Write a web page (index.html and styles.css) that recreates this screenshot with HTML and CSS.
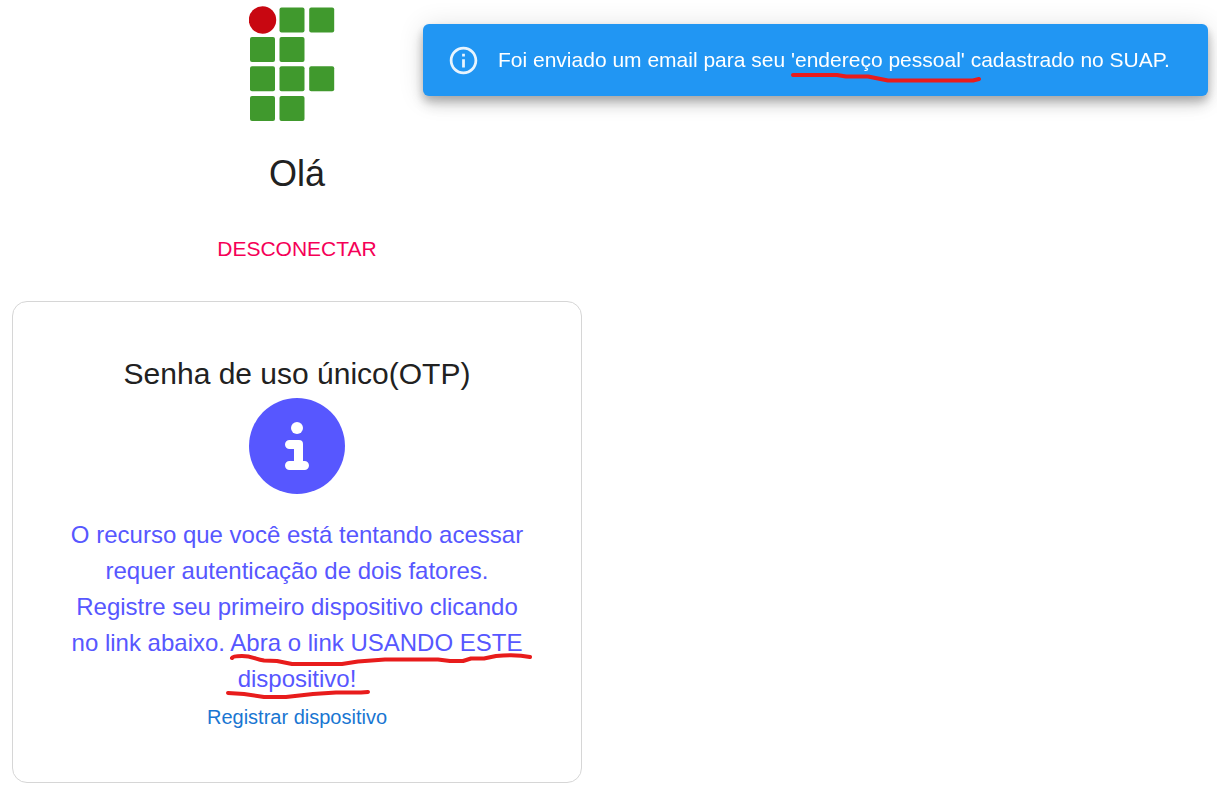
FILE: index.html
```html
<!DOCTYPE html>
<html lang="pt-BR">
<head>
  <meta charset="UTF-8" />
  <meta name="viewport" content="width=device-width, initial-scale=1.0"/>
  <title>Senha de uso único</title>
  <link rel="stylesheet" href="styles.css">
</head>
<body>
  <main class="container">
    <svg class="logo" viewBox="0 0 96 116" role="img" aria-label="IF">
      <circle cx="13.5" cy="14" r="13.7" fill="#c80711"/>
      <g fill="#40992d">
        <rect x="30.5" y="1.5" width="25" height="25" rx="2"/>
        <rect x="60.2" y="1.5" width="25" height="25" rx="2"/>
        <rect x="1" y="31" width="25" height="25" rx="2"/>
        <rect x="30.5" y="31" width="25" height="25" rx="2"/>
        <rect x="1" y="60.3" width="25" height="25" rx="2"/>
        <rect x="30.5" y="60.3" width="25" height="25" rx="2"/>
        <rect x="60.2" y="60.3" width="25" height="25" rx="2"/>
        <rect x="1" y="90" width="25" height="25" rx="2"/>
        <rect x="30.5" y="90" width="25" height="25" rx="2"/>
      </g>
    </svg>

    <h1>Olá</h1>
    <button class="btn" type="button">DESCONECTAR</button>

    <section class="card">
      <h2>Senha de uso único(OTP)</h2>
      <svg class="info" viewBox="0 0 96 96" aria-hidden="true">
        <circle cx="48" cy="48" r="48" fill="#5757ff"/>
        <circle cx="48" cy="30" r="6" fill="#fff"/>
        <path fill="#fff" d="M40.500 42H50a4 4 0 0 1 4 4v17h1.500a4.500 4.500 0 0 1 0 9h-15a4.500 4.500 0 0 1 0-9H45V51h-4.500a4.500 4.500 0 0 1 0-9z"/>
      </svg>
      <p class="texto">
        O recurso que você está tentando acessar requer autenticação de dois fatores. Registre seu primeiro dispositivo clicando no link abaixo.
        <span class="marca">Abra o link USANDO ESTE<svg class="risco" viewBox="0 0 302 12" aria-hidden="true"><path d="M2 5Q3 3 12 3C22 3 25 6 34 7.500L47 8L62 11H112L128 8.500L155 6.500H208L220 8H233L241 5.500H254L266 3Q286 1 300 4"/></svg></span>
        <span class="marca">dispositivo!<svg class="risco risco-curto" viewBox="0 0 144 12" aria-hidden="true"><path d="M2 4L18 5L38 8H60L87 5L110 3.500H135L142 3"/></svg></span>
      </p>
      <a class="link" href="#">Registrar dispositivo</a>
    </section>
  </main>

  <div class="alerta" role="alert">
    <svg class="alerta-icone" viewBox="0 0 24 24" aria-hidden="true">
      <path fill="#fff" d="M11 7h2v2h-2zm0 4h2v6h-2zm1-9C6.480 2 2 6.480 2 12s4.480 10 10 10 10-4.480 10-10S17.520 2 12 2zm0 18c-4.410 0-8-3.590-8-8s3.590-8 8-8 8 3.590 8 8-3.590 8-8 8z"/>
    </svg>
    <div>Foi enviado um email para seu <span class="marca">'endereço pessoal'<svg class="risco risco-alerta" viewBox="0 0 190 12" aria-hidden="true"><path d="M2 3H46L55 4.500H77L97 8.500H182L188 7"/></svg></span> cadastrado no SUAP.</div>
  </div>
</body>
</html>
```

FILE: styles.css
```css
body {
  margin: 0;
  font-family: "Liberation Sans", Arial, sans-serif;
  background-color: #fff;
  color: #212121;
}

.container {
  display: flex;
  flex-direction: column;
  align-items: center;
  max-width: 570px;
  padding: 6px 12px 8px;
}

.logo {
  width: 96px;
  height: 116px;
}

h1 {
  margin: 28px 0 35px;
  font-size: 36px;
  font-weight: normal;
  line-height: 48px;
}

.btn {
  margin-bottom: 36px;
  padding: 0 12px;
  border: none;
  background: none;
  font-family: inherit;
  font-size: 21px;
  line-height: 32px;
  color: #f50057;
  cursor: pointer;
}

.card {
  display: flex;
  flex-direction: column;
  align-items: center;
  box-sizing: border-box;
  width: 100%;
  padding: 48px;
  border: 1px solid #d6d6d6;
  border-radius: 15px;
  text-align: center;
}

h2 {
  margin: 0;
  font-size: 30px;
  font-weight: normal;
  line-height: 48px;
}

.info {
  width: 96px;
  height: 96px;
}

.texto {
  margin: 23px 0 0;
  font-size: 24px;
  line-height: 36px;
  color: #5757ff;
}

.link {
  margin-top: 5px;
  margin-bottom: 2px;
  font-size: 20px;
  line-height: 30px;
  color: #1976d2;
  text-decoration: none;
}

.alerta {
  position: fixed;
  top: 24px;
  right: 9px;
  display: flex;
  align-items: center;
  gap: 18px;
  box-sizing: border-box;
  width: 785px;
  max-width: calc(100% - 18px);
  padding: 21px 24px;
  border-radius: 6px;
  background-color: #2196f3;
  box-shadow: 0 5px 8px rgba(0,0,0,0.2), 0 9px 15px rgba(0,0,0,0.14), 0 2px 27px rgba(0,0,0,0.12);
  font-size: 21px;
  line-height: 30px;
  color: #fff;
}

.alerta-icone {
  flex-shrink: 0;
  width: 33px;
  height: 33px;
  margin: -2px 0;
  opacity: 0.9;
}

/* riscos vermelhos por baixo do texto */
.marca {
  position: relative;
  white-space: nowrap;
}

.risco {
  position: absolute;
  left: 0;
  top: 24px;
  width: 302px;
  height: 12px;
  overflow: visible;
  fill: none;
  stroke: #e81c1c;
  stroke-width: 4;
  stroke-linecap: round;
  stroke-linejoin: round;
}

.risco-curto {
  left: -12px;
  width: 144px;
}

.risco-alerta {
  left: 0;
  width: 190px;
}
```
